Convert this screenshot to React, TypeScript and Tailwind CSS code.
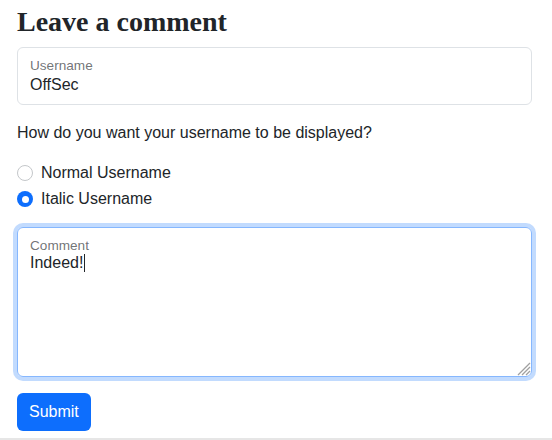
import React from "react";

export default function App() {
  return (
    <div
      className="w-[552px] h-[440px] overflow-hidden bg-white text-[#212529] flex flex-col"
      style={{ fontFamily: '"Liberation Sans", Arial, sans-serif' }}
    >
      <div className="px-[17px] flex-1">
        {/* Title */}
        <h1
          className="text-[28px] font-bold leading-[34px] pt-[5px]"
          style={{ fontFamily: '"Liberation Serif", "Times New Roman", serif' }}
        >
          Leave a comment
        </h1>

        {/* Username field */}
        <div className="mt-[8px] h-[58px] w-[515px] border border-[#dee2e6] rounded-[6px] px-3 pt-[10px]">
          <div className="text-[13.6px] leading-[16px] text-[#212529]/65">Username</div>
          <div className="text-[16px] leading-[20px] mt-[1px]">OffSec</div>
        </div>

        <p className="mt-[16px] text-[16px] leading-[24px]">
          How do you want your username to be displayed?
        </p>

        {/* Radios */}
        <div className="mt-[16px] flex flex-col gap-[2px]">
          <label className="flex items-center gap-[8px] h-[24px] text-[16px]">
            <span className="w-4 h-4 rounded-full border border-[#c4c7ca] bg-white" />
            Normal Username
          </label>
          <label className="flex items-center gap-[8px] h-[24px] text-[16px]">
            <span className="w-4 h-4 rounded-full bg-[#0d6efd] flex items-center justify-center">
              <span className="w-[7px] h-[7px] rounded-full bg-white" />
            </span>
            Italic Username
          </label>
        </div>

        {/* Comment textarea (focused) */}
        <div className="relative mt-[16px] h-[150px] w-[515px] border border-[#86b7fe] rounded-[6px] shadow-[0_0_0_4px_rgba(13,110,253,0.25)] px-3 pt-[10px]">
          <div className="text-[13.6px] leading-[16px] text-[#212529]/65">Comment</div>
          <div className="text-[16px] leading-[20px] -mt-[1px] flex items-center">
            Indeed!
            <span className="inline-block w-px h-[18px] bg-[#212529] ml-[1px]" />
          </div>
          <svg
            className="absolute right-0 bottom-0"
            width="15"
            height="15"
            viewBox="0 0 15 15"
          >
            <path d="M14 2 L2 14 M14 6 L6 14 M14 10 L10 14" stroke="#a0a0a0" strokeWidth="1.3" />
          </svg>
        </div>

        <button className="mt-[16px] h-[38px] px-3 rounded-[6px] bg-[#0d6efd] text-white text-[16px]">
          Submit
        </button>
      </div>
      <div className="h-[2px] bg-[#e6e6e6]" />
    </div>
  );
}
